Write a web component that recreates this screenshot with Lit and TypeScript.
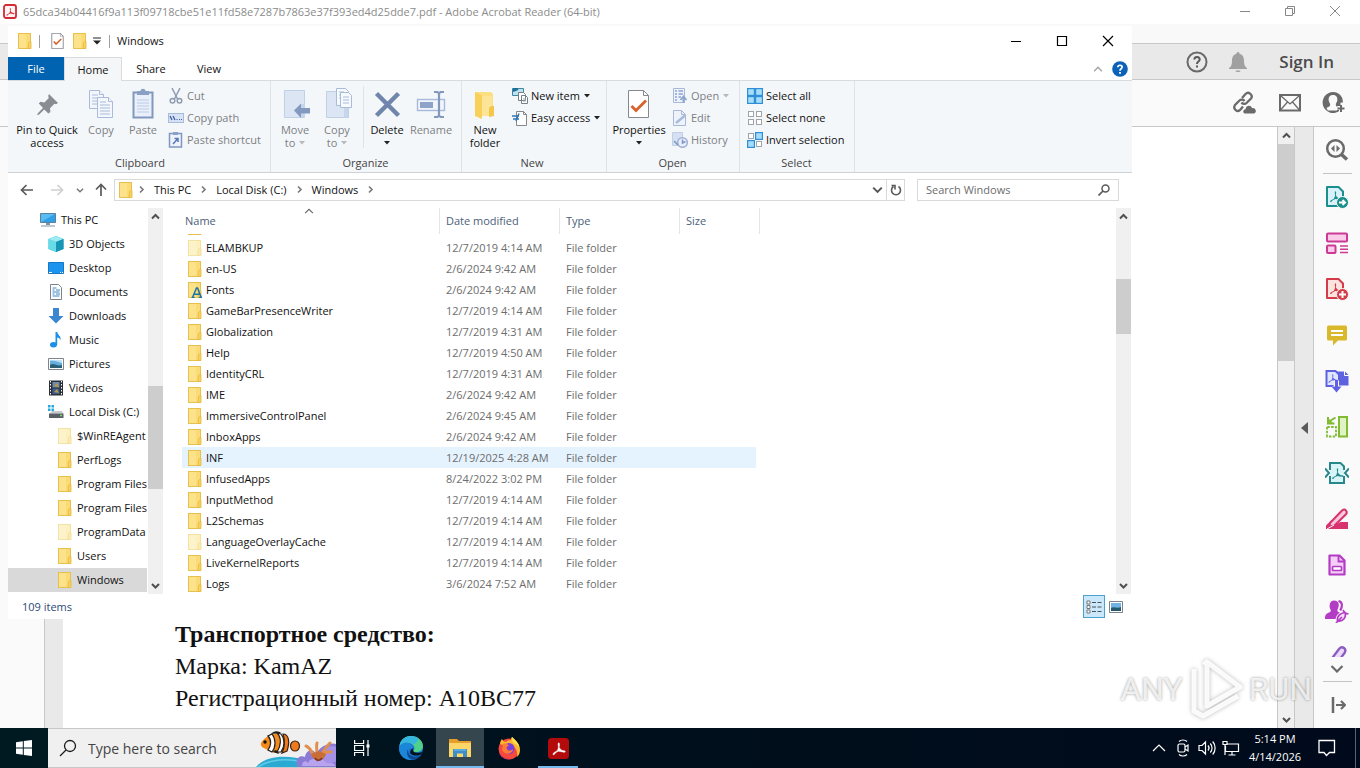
import { LitElement, html, svg, css, nothing, TemplateResult } from "lit";
import { customElement, property } from "lit/decorators.js";
import { classMap } from "lit/directives/class-map.js";

const icon = (w: number, h: number, body: unknown, vb = `0 0 ${w} ${h}`) =>
  html`<svg width=${w} height=${h} viewBox=${vb} fill="none" aria-hidden="true">${body}</svg>`;

/* ---------- Explorer icons ---------- */

const folderIcon = (pale = false, letter = false) =>
  icon(14, 16, svg`
    <rect x="0.5" y="0.5" width="12" height="15" fill=${pale ? "#fdf0bd" : "#fbdc74"} stroke=${pale ? "#f3e2a4" : "#e8c04f"}/>
    <path d="M1 1h7v14H1z" fill=${pale ? "#fdf3cb" : "#fce28b"}/>
    <path d="M10.500 9.500l1-1h1.500v7h-3z" fill=${pale ? "#fcecb0" : "#f8d25c"} stroke=${pale ? "#f0dc98" : "#e3b840"} stroke-width=".8"/>
    ${letter ? svg`<path d="M4.500 15.500L8.500 6h1l3.800 9.500M6.200 12.200h5.600M3.600 15.500h3M11 15.500h3" stroke="#1a76a8" stroke-width="1.500"/>` : nothing}`);

const chevron = (dir: "up" | "down" | "right", color = "#505050", size = 9, weight = 1.6) => {
  const d = { up: "M1 6.500L4.500 3 8 6.500", down: "M1 3l3.500 3.500L8 3", right: "M3 1.500l3 3-3 3" }[dir];
  return icon(size, size, svg`<path d=${d} stroke=${color} stroke-width=${weight}/>`, "0 0 9 9");
};

const caret = (color = "#222") => icon(6, 4, svg`<path d="M0 0h6L3 3.500z" fill=${color}/>`);

const I = {
  docCheck: (w: number, h: number) => icon(w, h, svg`
    <path d="M.5.5h15l5 5v22H.5z" fill="#fff" stroke="#7b8087" stroke-width="1.500"/>
    <path d="M15.500.5v5h5" stroke="#7b8087"/>
    <path d="M4 15l4 4.500 9-9" stroke="#d9622b" stroke-width="2.800"/>`, "0 0 21 28"),
  pin: icon(32, 32, svg`
    <path d="M18 6l9 9-2 1.200-1.600-.4-4.400 4.400.4 3.800-2 1.600-4.200-4.200-5 5L6 27l1-2 5-5-4.200-4.400 1.600-1.800 4 .6 4.400-4.400L17.200 8z" fill="#888d93"/>`),
  copy: icon(32, 32, svg`
    <g fill="#f3f7fd" stroke="#a9bbd9"><path d="M4.500 2.500h10l4 4v14h-14z"/><path d="M14.500 2.500v4h4"/>
    <path d="M7 7h6M7 10h9M7 13h9M7 16h9"/>
    <path d="M12.500 9.500h11l4 4v16h-15z"/><path d="M23.500 9.500v4h4"/><path d="M15 14h6M15 17h10M15 20h10M15 23h10M15 26h10"/></g>`),
  paste: icon(32, 32, svg`
    <rect x="6.500" y="4.500" width="19" height="25" fill="#e9f0fb" stroke="#8198bd" stroke-width="2"/>
    <path d="M10 12h12M10 15h12M10 18h12M10 21h12M10 24h12" stroke="#bccbe4"/>
    <path d="M10 3h3.500c0-3 5-3 5 0H22v4H10z" fill="#8aa0c4"/>`),
  cut: icon(16, 16, svg`
    <path d="M4 0l5.500 11M12 0L6.500 11" stroke="#8f9cb0" stroke-width="1.500"/>
    <circle cx="4.500" cy="12.800" r="2.300" stroke="#8f9cb0" stroke-width="1.500"/><circle cx="11.500" cy="12.800" r="2.300" stroke="#8f9cb0" stroke-width="1.500"/>`),
  path: icon(16, 16, svg`
    <rect x=".5" y="3.500" width="15" height="9" fill="#d7e2f5" stroke="#a9bbdc"/>
    <path d="M2 6l2 4M5 6l2 4" stroke="#3f5e9a" stroke-width="1.300"/><path d="M8.500 9.500h1M11 9.500h1M13 9.500h1" stroke="#3f5e9a"/>`),
  shortcut: icon(16, 16, svg`
    <rect x="1.500" y="1.500" width="12" height="13.500" fill="#eef3fb" stroke="#7f97c0" stroke-width="1.500"/>
    <path d="M5 0h5v3H5z" fill="#8aa0c4"/><path d="M5 12l4.500-5M6.500 6.500H10V10" stroke="#5579b8" stroke-width="1.500"/>`),
  moveTo: icon(32, 32, svg`
    <path d="M5.500 2.500h20v27h-20z" fill="#dbe5f4" stroke="#c2d0e6"/><path d="M22 16h4v13h-4z" fill="#c8d6eb"/>
    <path d="M15 22.500l7-7v4.500h9v5.500h-9V30z" fill="#8399bf"/>`),
  copyTo: icon(32, 32, svg`
    <path d="M5.500 3.500h22v26h-22z" fill="#dbe5f4" stroke="#c2d0e6"/><path d="M23 18h4v11h-4z" fill="#c8d6eb"/>
    <g fill="#f6f9fe" stroke="#a9bbd9"><path d="M15.500.5h9l3 3v14h-12z"/><path d="M18 4h5M18 7h5M18 10h5"/>
    <path d="M19.500 4.500h8l3 3v12h-11z"/><path d="M22 9h6M22 12h6M22 15h6"/></g>`),
  del: icon(32, 32, svg`<path d="M5.500 5.500l22 22M27.500 5.500l-22 22" stroke="#6f85ab" stroke-width="4.500"/>`),
  rename: icon(32, 32, svg`
    <rect x="2.500" y="11.500" width="27" height="11" fill="#f2f6fc" stroke="#a7badb" stroke-width="1.400"/>
    <rect x="5" y="14" width="13" height="6" fill="#8da3c9"/>
    <path d="M19 4h3.500l1.500 1.500L25.500 4H29M24 5v23M19 29h3.500l1.500-1.500 1.500 1.500H29" stroke="#8398bd" stroke-width="2.200"/>`),
  bigFolder: icon(32, 32, svg`
    <path d="M6 4h16l2 2v22H6z" fill="#fbdf80"/><path d="M6 4l7 3.500V31l-7-3z" fill="#f8d05a"/>
    <path d="M13 8h10v20H13z" fill="#fce596"/><path d="M20 20l2-2h3v10l-5 1z" fill="#f4c64a"/>`),
  newItem: icon(16, 16, svg`
    <path d="M.5.5h11v7H.5z" fill="#bfe0ee" stroke="#3f86a5"/><path d="M1 3l5-2M1 1h4" stroke="#1e6f97" stroke-width="2"/>
    <path d="M6.500 4.500h5l2 2v6h-7zM9.500 7.500h4l2 2v6h-6z" fill="#fff" stroke="#767e88"/><path d="M11 11h3M11 13h3" stroke="#9aa"/>`),
  easy: icon(16, 16, svg`
    <path d="M4.500 1.500h7l3 3v11h-10z" fill="#fff" stroke="#83898f"/><path d="M11.500 1.500v3h3" stroke="#83898f"/>
    <path d="M0 6h7M1 9h6M7 3.500L4 11" stroke="#2e77b5" stroke-width="1.500"/>`),
  open: icon(16, 16, svg`
    <path d="M1.500.5h11v14h-11z" fill="#eef3fb" stroke="#a9b9d5"/><path d="M3 3h2M3 6h2M3 9h2M3 12h2M6.500 3H11M6.500 6H11M6.500 9H9" stroke="#8ea5cf" stroke-width="1.500"/>
    <path d="M11.500 15V9.500M8.500 12l3-3.500 3 3.500" stroke="#8ea5cf" stroke-width="1.800"/>`),
  edit: icon(16, 16, svg`
    <path d="M1.500.5h8l4 4v11h-12z" fill="#eef3fb" stroke="#a9b9d5"/><path d="M9.500.5v4h4" stroke="#a9b9d5"/><path d="M4 13l9-7.500" stroke="#a9bbdc" stroke-width="2.500"/>`),
  history: icon(16, 16, svg`
    <path d="M.5.5h10v13H.5z" fill="#d5e0f2" stroke="#c0cee6"/><circle cx="10.500" cy="10.500" r="4.800" fill="#e8eefa" stroke="#9db0d4" stroke-width="1.500"/>
    <path d="M10.500 7.500v3.500l3-1.500M2 9l4 4" stroke="#7f97c4" stroke-width="1.500"/>`),
  selectAll: icon(16, 16, svg`<g fill="#a8dcfb" stroke="#2e8fd6" stroke-width="1.200">
    <rect x=".6" y=".6" width="6.800" height="6.800"/><rect x="8.600" y=".6" width="6.800" height="6.800"/><rect x=".6" y="8.600" width="6.800" height="6.800"/><rect x="8.600" y="8.600" width="6.800" height="6.800"/></g>`),
  selectNone: icon(16, 16, svg`<g fill="#fff" stroke="#a0a4a8">
    <rect x="1.500" y="1.500" width="5" height="5"/><rect x="9.500" y="1.500" width="5" height="5"/><rect x="1.500" y="9.500" width="5" height="5"/><rect x="9.500" y="9.500" width="5" height="5"/></g>`),
  invert: icon(16, 16, svg`
    <g fill="#fff" stroke="#a0a4a8"><rect x="1.500" y="1.500" width="5" height="5"/><rect x="9.500" y="9.500" width="5" height="5"/></g>
    <g fill="#a8dcfb" stroke="#2e8fd6" stroke-width="1.200"><rect x="8.600" y=".6" width="6.800" height="6.800"/><rect x=".6" y="8.600" width="6.800" height="6.800"/></g>`),
};

const place: Record<string, TemplateResult> = {
  pc: icon(16, 16, svg`<path d="M.5 1.500h15v9H.5z" fill="#2f9fe8" stroke="#59809c"/><path d="M1 2h14L1 10z" fill="#5bbcf4"/><path d="M6 11h4v2H6zM1 13.500h14v1H1z" fill="#7d96a8"/>`),
  cube: icon(16, 16, svg`<path d="M8 0l7.500 3v10L8 16 .5 13V3z" fill="#27b3c9"/><path d="M.5 3L8 6v10L.5 13z" fill="#67dbe6"/><path d="M8 0l7.500 3L8 6 .5 3z" fill="#9bebf0"/><path d="M8 6l7.500-3v10L8 16z" fill="#1795b4"/>`),
  desktop: icon(16, 16, svg`<path d="M.5 2.500h15v11H.5z" fill="#1d95ee" stroke="#1478c4"/><path d="M1 12.500h3M12 12.500h1M14 12.500h1" stroke="#fff"/>`),
  docs: icon(16, 16, svg`<path d="M2.500.5h8l3 3v12h-11z" fill="#fff" stroke="#7d8388"/><path d="M4.500 4h4M4.500 6h2M8 6h4M4.500 8h7M4.500 10h2M8 10h4M4.500 12h7" stroke="#3d88c2"/>`),
  down: icon(16, 16, svg`<path d="M5 0h6v8h4.500L8 15.500.5 8H5z" fill="#3a86cf"/>`),
  music: icon(16, 16, svg`<ellipse cx="5.500" cy="12.800" rx="3.500" ry="2.700" fill="#1c8fe6"/><path d="M7.500 0h1.700c.3 3 4.300 4 3.300 8.500-.6-2-1.800-2.800-3.300-3V13H7.500z" fill="#1c8fe6"/>`),
  pictures: icon(16, 16, svg`<path d="M.5 2.500h15v11H.5z" fill="#fff" stroke="#7d8388"/><path d="M2 4h12v8H2z" fill="#64aee0"/><path d="M2 9c4-3 7 2 12 0v3H2z" fill="#2a5f75"/><path d="M2 5c5-1 7 1 12 2V4H2z" fill="#bfe0f5"/>`),
  videos: icon(16, 16, svg`<path d="M1 .5h14v15H1z" fill="#2b3037"/><path d="M2.500 1v14M13.500 1v14" stroke="#fff" stroke-dasharray="1.500 1.500"/><path d="M4.500 2h7v5.500h-7z" fill="#6f8cae"/><path d="M4.500 8.500h7V14h-7z" fill="#3d5d93"/><path d="M6 6l3-3 2 4zM6 12l3-3 2 4z" fill="#b79845"/>`),
  disk: icon(16, 16, svg`<path d="M1.500 9.500L4 7h10l1.500 2.500z" fill="#c6cbd0"/><path d="M1 9.500h14.500v4.500H1z" fill="#5a6066"/><path d="M12 11.500h2" stroke="#69e06b" stroke-width="1.500"/><path d="M0 1h2.500v2.500H0zM3.500 1H6v2.500H3.500zM0 4.500h2.500V7H0zM3.500 4.500H6V7H3.500z" fill="#24a8e0"/>`),
  folder: folderIcon(),
  pale: folderIcon(true),
};

/* ---------- Acrobat icons ---------- */

const acroMark = "M11 5.500c1 0 .9 2.400.4 4.200 1 2.200 2.600 3.300 4.800 3.300 1.500.2 1.300 1.800-.2 1.600-1.800-.3-3.600-.9-5-1-1.800.5-3.200 1.500-4.200 3-.8.9-1.900-.1-1.200-1 1-1 2.500-1.700 3.700-2.300.8-1.400 1.300-2.800 1.400-3.800-.4-1.700-.7-4 .3-4z";
const tool = (body: unknown) => icon(24, 24, body);
const pdfDoc = (line: string, fill: string) => svg`
  <path d="M2 2h11.500L18 6.500V21H2z" fill=${fill} stroke=${line} stroke-width="2" stroke-linejoin="round"/>
  <path d=${acroMark} fill=${line} transform="translate(0 1) scale(.95)"/>`;

const tools: { name: string; art: TemplateResult }[] = [
  { name: "Export PDF", art: tool(svg`${pdfDoc("#1b8f8d", "#d8f1fb")}<circle cx="17.500" cy="17.500" r="6" fill="#1b8f8d" stroke="#fafafa"/><path d="M14 17.500h6M17.500 15l2.700 2.500-2.700 2.500" stroke="#fff" stroke-width="1.800"/>`) },
  { name: "Edit PDF", art: tool(svg`<g fill="#fbcbea" stroke="#cc3a96" stroke-width="2"><rect x="2" y="2.500" width="20" height="8" rx="1"/><rect x="2" y="14.500" width="8.500" height="7.500" rx="1"/></g><path d="M15 15h8M15 18.300h8M15 21.500h8" stroke="#cc3a96" stroke-width="1.400"/>`) },
  { name: "Create PDF", art: tool(svg`${pdfDoc("#d33c48", "#fde3de")}<circle cx="17.500" cy="17.500" r="6" fill="#d33c48" stroke="#fafafa"/><path d="M14 17.500h7M17.500 14v7" stroke="#fff" stroke-width="2"/>`) },
  { name: "Comment", art: tool(svg`<path d="M3.500 2.500h17q1.500 0 1.500 1.500v12q0 1.500-1.500 1.500H13L8 22.500v-5H3.500Q2 17.500 2 16V4q0-1.500 1.500-1.500z" fill="#d9b92b"/><path d="M6 8h12M6 12h12" stroke="#fff" stroke-width="1.800"/>`) },
  { name: "Combine Files", art: tool(svg`<path d="M12 2.500h8l3.500 3.500v10.500H12z" fill="#5f62e0"/><path d="M19.500 2v4.500H24" stroke="#fff"/><path d="M1.500 2h9L14 5.500V17H1.500z" fill="#dfe5fd" stroke="#5f62e0" stroke-width="2"/><path d=${acroMark} fill="#5f62e0" transform="translate(-.5 1) scale(.75)"/><path d="M11.500 11.500v9M7.500 17.500l4 4.500 4-4.500" stroke="#fafafa" stroke-width="5"/><path d="M11.500 11v9" stroke="#5f62e0" stroke-width="3"/><path d="M6.500 17.500h10l-5 6z" fill="#5f62e0"/>`) },
  { name: "Organize Pages", art: tool(svg`<rect x="14" y="2" width="8" height="19.500" fill="#dff3c6" stroke="#81bb31" stroke-width="2"/><path d="M2 12v9.500h9V12z" stroke="#81bb31" stroke-width="1.800" stroke-dasharray="2.500 1.300"/><path d="M10.500 2.500L5 6M3 2v6.500h6.500" stroke="#81bb31" stroke-width="2"/><path d="M3 3v5.500h5.500z" fill="#81bb31"/>`) },
  { name: "Compress PDF", art: tool(svg`<path d="M5 9V2h10.500L19 5.500V9M5 15v7h14v-7" fill="#d8f4f6" stroke="#26888b" stroke-width="2"/><path d="M5 9v6h14V9z" fill="#d8f4f6"/><path d=${acroMark} fill="#26888b" transform="translate(2 2) scale(.95)"/><path d="M0 7.500L4 12 0 16.500M24 7.500L20 12l4 4.500" stroke="#26888b" stroke-width="2"/>`) },
  { name: "Redact", art: tool(svg`<path d="M1 22v-3.500L6.500 13l5 4 4-2H23v7z" fill="#d6336f"/><path d="M5.500 15.500L17 3.500q2.500-2 4 0t0 3.800L9.500 18.500l-5.500 1z" fill="#fcc9dc" stroke="#d6336f" stroke-width="2"/><path d="M2 22l7-4" stroke="#fafafa"/>`) },
  { name: "Prepare Form", art: tool(svg`<path d="M4.500 2.500h10l5 5v14h-15z" fill="#f5cdf8" stroke="#b23cc4" stroke-width="2.200" stroke-linejoin="round"/><path d="M13.500 3v5.500h6" stroke="#b23cc4" stroke-width="1.800"/><rect x="7.500" y="13.500" width="9" height="4" rx="1" fill="#fff" stroke="#b23cc4" stroke-width="1.700"/>`) },
  { name: "Request E-signatures", art: tool(svg`<path d="M9 1.500c4 0 5.500 3 4.500 6.500-.5 2-1.500 2.500-1 4 .5 1 1.500 1.300 2.500 1.700-2.500 1.300-4 3.300-4.500 6.300H0c0-4 1-5.500 4-6.500 1.800-.6 2.200-1.500 1.500-3C3.500 6.500 5 1.500 9 1.500z" fill="#b23cc4"/><path d="M13.500 2c4.500 1 4 5.500 1.700 9.500" stroke="#b23cc4" stroke-width="2.200"/><path d="M12.500 22c-1-5 3-8 7.500-8.500 1.500 4.500-1.500 9.500-7.500 8.500zM11 24l6-6M18 11l1.500 2.500M20 14l3.500 1" fill="#f8dcfb" stroke="#b23cc4" stroke-width="1.700"/>`) },
  { name: "Fill & Sign", art: tool(svg`<path d="M4 22L16 6q2.500-3 5-1t.5 5L11 24z" fill="#ecd9fb" stroke="#8a5cc0" stroke-width="2.300" transform="translate(-2 -2)"/>`) },
];

const A = {
  app: icon(14, 15, svg`<rect x="1" y="1" width="12" height="13" rx="2" fill="#fff5f5" stroke="#d22b35" stroke-width="1.800"/><path d=${acroMark} fill="#d22b35" transform="translate(-.2 .2) scale(.68)"/>`),
  help: icon(22, 22, svg`<circle cx="11" cy="11" r="9.500" stroke="#6a6a6a" stroke-width="2"/><path d="M8.300 8.500c.3-3.500 5.700-3.200 5.400.2-.2 1.900-2.700 2-2.700 4.300" stroke="#5a5a5a" stroke-width="2"/><path d="M10 14.500h2v2h-2z" fill="#5a5a5a"/>`),
  bell: icon(20, 22, svg`<path d="M10 1c1.200 0 1.500 1 1.500 1.700 3.500 1 4.500 3.800 4.500 7 0 4 1 6 3 7.300v1H1v-1c2-1.300 3-3.300 3-7.300 0-3.200 1-6 4.500-7C8.500 2 8.800 1 10 1zM7.500 19.500h5c-.3 2-4.700 2-5 0z" fill="#a0a0a0"/>`),
  link: icon(26, 24, svg`<g stroke="#6a6a6a" stroke-width="2.300"><path d="M10 7l3.500-4c3-3 8 1 5.500 4.500L14.500 12c-1.500 1.500-4 1-5-.5"/><path d="M11 15.500l-2.500 3c-3 3.500-8-.5-5.500-4.500L7.500 9.500c1.500-1.500 4-1 5 .5"/></g><path d="M13.500 22.500c-3 0-3-4 0-4.300.5-4 5.500-4.500 6.500-1 4-1 5.500 5.300 1.500 5.300z" fill="#6a6a6a"/>`),
  mail: icon(24, 20, svg`<rect x="2" y="2" width="20" height="15.500" stroke="#6a6a6a" stroke-width="2"/><path d="M2.500 2.500L12 11l9.500-8.500M2.500 17l7-8M21.500 17l-7-8" stroke="#6a6a6a" stroke-width="1.300"/>`),
  person: icon(24, 24, svg`<path d="M11 1a10 10 0 0 1 10 10.500h-2.500V15h-3.200v4H17v1.200A10.500 10.500 0 1 1 11 1z" fill="#6a6a6a"/><path d="M11 4c3.500 0 4.800 2.500 4.300 5.500-.3 2-1.500 2.500-1.500 4.500 0 1.500 2 2 3 3l-2 2.500h-9L4.500 17c1.500-1 3.700-1.500 3.700-3 0-2-1.200-2.500-1.500-4.500C6.200 6.500 7.500 4 11 4z" fill="#fafafa"/><path d="M19 14v7M15.500 17.500h7" stroke="#6a6a6a" stroke-width="2"/>`),
  find: icon(24, 24, svg`<circle cx="10.500" cy="10.500" r="8.300" stroke="#6a6a6a" stroke-width="2.500"/><path d="M16.500 16.500l5.500 5" stroke="#6a6a6a" stroke-width="3.500"/><path d="M9.500 7v7L6 10.500zM11.500 7v7l3.500-3.500z" fill="#6a6a6a"/>`),
  exit: icon(18, 18, svg`<path d="M5 1v16" stroke="#6a6a6a" stroke-width="2.500"/><path d="M8 9h8.500M13 5l4 4-4 4" stroke="#6a6a6a" stroke-width="2.200"/>`),
};

/* ---------- Taskbar icons ---------- */

const T = {
  start: icon(16, 16, svg`<path d="M0 2.200L6.800 1.200v6.300H0zM7.800 1L16 0v7.500H7.800zM0 8.500h6.800v6.300L0 13.800zM7.800 8.500H16V16l-8.200-1z" fill="#fff"/>`),
  search: icon(18, 18, svg`<circle cx="11" cy="7" r="5.500" stroke="#1c1c1c" stroke-width="1.300"/><path d="M7 11l-6 6" stroke="#1c1c1c" stroke-width="1.300"/>`),
  reef: icon(80, 38, svg`
    <path d="M0 38C10 26 32 25 52 32l10 6z" fill="#2aa9d2"/><path d="M2 38c12-8 30-9 44-5" stroke="#62cbe6" stroke-width="1.500"/>
    <path d="M5 14c4-6 12-11 19-9 5 1 7 6 6 12-1 3-3 6-5 6-6 2-11 0-15-3-3-1-6-3-5-6z" fill="#f28a1c"/>
    <path d="M12 7c4 4 3 10 0 14l4 2c4-5 4-13 0-18z" fill="#fff" stroke="#222" stroke-width="1.200"/>
    <path d="M21 4c5 5 4 13 0 19h4c4-6 4-13 0-18z" fill="#fff" stroke="#222" stroke-width="1.200"/>
    <path d="M15 5c3-4 8-3 10-1zM17 23c2-3 5-2 6 2z" fill="#1d1d1d"/><circle cx="9" cy="13" r="1.700" fill="#111"/>
    <path d="M27 5c6 0 7 8 4 17l-5 2c3-6 3-13 1-19z" fill="#ee7a1d" stroke="#3b2417" stroke-width="1.200"/>
    <ellipse cx="39" cy="17" rx="4.500" ry="5" fill="#ee7a1d" stroke="#3b2417" stroke-width="1.200"/>
    <path d="M42 38c-4-7 1-13 7-10 1-8 9-9 11-3 4-9 16-12 20-10v23z" fill="#8b7bd6"/>
    <path d="M46 37c0-5 4-6 6-3 2-5 8-5 9-1 4-4 9-3 10 1 3-1 9 1 8 3z" fill="#b7a3ee"/>
    <path d="M66 22c5-5 11-6 14-4v14c-4 3-9 3-12 0z" fill="#a592e6"/>
    <path d="M57 26c-2-5-4-8-7-9M61 25c0-5-1-8 0-11M66 25c2-5 5-8 8-11M65 27c3-3 7-5 10-4" stroke="#e08f4c" stroke-width="3" stroke-linecap="round"/>
    <path d="M55 25c3 9 12 9 15 0l-7-3z" fill="#c96c35"/><path d="M59 29c2 3 5 3 7 0" stroke="#7c3420" stroke-width="1.500"/>`),
  taskview: icon(18, 18, svg`<g stroke="#fff" stroke-width="1.200"><path d="M1.600 1v3.500h9V1M1.600 17v-3.500h9V17M1.600 6.500h9v5h-9zM15 1v16"/></g><path d="M13.500 5.500h3v3h-3z" fill="#fff"/>`),
  edge: icon(26, 26, svg`
    <circle cx="13" cy="13" r="12" fill="#1a75cf"/>
    <path d="M1.500 11C3 3 9 1 13 1c7 0 12 5 12 10 0 4-3 6-6.500 6-2 0-3.500-.7-3-1.600 1-1.200 1.200-2.400.6-4C14.500 8 10.500 7 7 7.500c-2.500.5-4.500 2-5.500 3.500z" fill="#4fd08c"/>
    <path d="M1.500 11C3 3 9 1 13 1c3 0 5.500 1 7 2 0 4-3 6-5 6.500C12 7 8 7 5 8.500c-1.500.7-2.700 1.500-3.500 2.500z" fill="#35b6e0"/>
    <path d="M1 13c1-4 5-6 9-5 3 .7 5 3 5 5-3-1-5.500 1.500-5 5 .5 3 3 5.500 7 6.300C8 27 1 21 1 13z" fill="#1c86d8"/>
    <path d="M10 14c-1 7 7 10 13.500 5.500-2 3-5 5-8.500 5.300-5-1-7.500-6-5-10.800z" fill="#0d4a93"/>
    <path d="M15.500 13.500c-.5 1.200-1 2.500.5 3.500 3 1.500 6 .7 8 0l-.5 2c-4 2.500-9.500 2-11.500-1 0-2.500 1.500-4.500 3.500-4.500z" fill="#04131e"/>`),
  folder: icon(22, 20, svg`<path d="M0 1h8l2 2h12v4H0z" fill="#e79d2a"/><path d="M0 5h22v14H0z" fill="#fcd669"/><path d="M4 19v-8h14v8h-4v-3.500H8V19z" fill="#3d8fcb"/><path d="M5 11h12v2H5z" fill="#57a9de"/>`),
  firefox: icon(24, 24, svg`
    <circle cx="12" cy="13" r="10.500" fill="#f5483f"/><path d="M3 8c0-2 1-4 2-5 1 2 2 3 4 3 1-1 3-2 5-2 0-1 0-2 1-3 2 2 8 6 8 13 0 3-1 5-3 7 1-7-2-11-8-12C7 9 4 9 3 8z" fill="#ffb62e"/>
    <path d="M15 1c2 2 6.500 5 7.500 11-2-3-4-4-6-5-1.500-1.500-2-4-1.500-6z" fill="#ffe04a"/>
    <circle cx="12" cy="12.500" r="5.500" fill="#7a3fd8"/><path d="M6 8c3-1 5 0 6 2-2 0-3 1-2 3s4 2 6 0c0 5-8 7-11 1z" fill="#ff7a35"/>
    <path d="M2 17c3 7 13 9 19 2-4 6-14 5-19-2z" fill="#d62a7e"/>`),
  acrobat: icon(21, 21, svg`<rect width="21" height="21" rx="3.500" fill="#b30b0b"/><path d=${acroMark} fill="#fff" stroke="#fff" stroke-width=".4" transform="translate(-.8 -1) scale(1.050)"/>`),
  up: icon(14, 8, svg`<path d="M1 7l6-6 6 6" stroke="#fff" stroke-width="1.200"/>`),
  meet: icon(14, 18, svg`<g stroke="#fff" stroke-width="1.200"><rect x="2" y="5" width="7" height="8" rx="1.500"/><path d="M9 8l3-2v6L9 10M3 2.500c2-2 6-2 8 0M3 15.500c2 2 6 2 8 0"/></g>`),
  sound: icon(18, 16, svg`<g stroke="#fff" stroke-width="1.200"><path d="M1 5.500h3L7.500 2v12L4 10.500H1zM10 5.500c1.300 1.500 1.300 3.500 0 5M12.300 3.500c2.300 2.500 2.300 6.500 0 9M14.700 1.500c3.200 3.500 3.200 9.500 0 13"/></g>`),
  net: icon(18, 16, svg`<g stroke="#fff" stroke-width="1.200"><path d="M5 4h11.500v7.500H3.500V6M10 11.500V15M6.500 15h7M1 1.500h4v3H1zM3 4.500V15"/></g>`),
  note: icon(18, 18, svg`<path d="M1 1.500h15.500v12h-5l-3 3-2.500-3H1z" stroke="#fff" stroke-width="1.300"/>`),
};

const sharedType = css`
  :host { font-family: "Open Sans", "Noto Sans", sans-serif; box-sizing: border-box; }
  *, *::before, *::after { box-sizing: border-box; }
  button, input { font: inherit; color: inherit; background: none; border: 0; padding: 0; margin: 0; border-radius: 0; outline: 0; }
  svg { display: block; flex: none; }
`;

/* ---------- Scroll bar ---------- */

@customElement("scroll-bar")
class ScrollBar extends LitElement {
  @property({ type: Number }) before = 0;
  @property({ type: Number }) thumb = 1;
  @property({ type: Number }) after = 1;
  static styles = [sharedType, css`
    :host { display: flex; flex-direction: column; flex: none; width: 15px; background: #f0f0f0; }
    button { height: 17px; display: grid; place-items: center; flex: none; }
    .thumb { background: #cdcdcd; }
  `];
  render() {
    return html`
      <button aria-label="Scroll up">${chevron("up", "#505050", 9, 2)}</button>
      <div style="flex:${this.before} 0 0"></div>
      <div class="thumb" style="flex:${this.thumb} 0 0"></div>
      <div style="flex:${this.after} 0 0"></div>
      <button aria-label="Scroll down">${chevron("down", "#505050", 9, 2)}</button>`;
  }
}

/* ---------- Explorer window ---------- */

type Small = [TemplateResult, string, boolean?, boolean?];

const folders: [string, string, string?][] = [
  ["Downloaded Program Files", "12/7/2019 4:14 AM"],
  ["ELAMBKUP", "12/7/2019 4:14 AM", "pale"],
  ["en-US", "2/6/2024 9:42 AM"],
  ["Fonts", "2/6/2024 9:42 AM", "font"],
  ["GameBarPresenceWriter", "12/7/2019 4:14 AM"],
  ["Globalization", "12/7/2019 4:31 AM"],
  ["Help", "12/7/2019 4:50 AM"],
  ["IdentityCRL", "12/7/2019 4:31 AM"],
  ["IME", "2/6/2024 9:42 AM"],
  ["ImmersiveControlPanel", "2/6/2024 9:45 AM"],
  ["InboxApps", "2/6/2024 9:42 AM"],
  ["INF", "12/19/2025 4:28 AM", "hover"],
  ["InfusedApps", "8/24/2022 3:02 PM"],
  ["InputMethod", "12/7/2019 4:14 AM"],
  ["L2Schemas", "12/7/2019 4:14 AM"],
  ["LanguageOverlayCache", "12/7/2019 4:14 AM", "pale"],
  ["LiveKernelReports", "12/7/2019 4:14 AM"],
  ["Logs", "3/6/2024 7:52 AM"],
];

const tree: [number, string, string][] = [
  [0, "pc", "This PC"], [1, "cube", "3D Objects"], [1, "desktop", "Desktop"], [1, "docs", "Documents"],
  [1, "down", "Downloads"], [1, "music", "Music"], [1, "pictures", "Pictures"], [1, "videos", "Videos"],
  [1, "disk", "Local Disk (C:)"], [2, "pale", "$WinREAgent"], [2, "folder", "PerfLogs"], [2, "folder", "Program Files"],
  [2, "folder", "Program Files (x86)"], [2, "pale", "ProgramData"], [2, "folder", "Users"], [2, "folder", "Windows"],
];

@customElement("explorer-window")
class ExplorerWindow extends LitElement {
  static styles = [sharedType, css`
    :host { display: flex; flex-direction: column; background: #fff; color: #111; font-size: 11px; line-height: 16px; }
    .title { display: flex; align-items: center; height: 31px; flex: none; padding: 0 1px 1px 10px; }
    .title .sep { width: 1px; height: 13px; background: #a0a0a0; margin: 0 7px; }
    .title .quick { display: flex; align-items: center; }
    .title .props { margin: 0 9px 0 4px; }
    .title .more { margin: 0 0 0 5px; }
    .title .space { flex: 1; }
    .ctl { width: 46px; height: 30px; display: grid; place-items: center; }
    .tabs { display: flex; height: 24px; flex: none; border-bottom: 1px solid #dadbdc; padding-right: 1px; align-items: stretch; }
    .tabs .tab { width: 58px; }
    .tabs .file { width: 56px; background: #0063b1; color: #fff; }
    .tabs .home { background: #f5f6f7; border: 1px solid #dadbdc; border-bottom: 0; height: 24px; }
    .tabs .space { flex: 1; }
    .tabs .tool { width: 22px; display: grid; place-items: center; }
    .ribbon { display: flex; height: 92px; flex: none; background: #f4f7fa; border-bottom: 1px solid #cfd2d6; }
    .group { display: flex; flex-direction: column; border-right: 1px solid #dfe2e6; flex: none; padding-left: 3px; }
    .clipboard { width: 263px; padding-left: 6px; }
    .organize { width: 191px; }
    .new { width: 145px; padding-left: 0; }
    .open { width: 133px; }
    .select { width: 115px; }
    .cmds { display: flex; flex: 1; }
    .caption { text-align: center; line-height: 18px; color: #444; padding-right: 4px; }
    .big { width: 42px; display: flex; flex-direction: column; align-items: center; padding-top: 7px; line-height: 13px; white-space: nowrap; }
    .big svg + span { margin-top: 3px; }
    .big.w66 { width: 66px; }
    .big.w46 { width: 46px; }
    .big.w58 { width: 58px; }
    .big .arrow { height: 13px; display: grid; place-items: center; }
    .big .line { display: flex; align-items: center; gap: 4px; }
    .dim { color: #7c7f84; }
    .rule { width: 1px; background: #dfe2e6; margin: 5px 2px 6px 5px; }
    .stack { display: flex; flex-direction: column; padding: 4px 0 0 4px; }
    .stack button { height: 22px; display: flex; align-items: center; gap: 3px; white-space: nowrap; }
    .stack button svg + span + svg { margin-left: 1px; }
    .nav { display: flex; align-items: center; height: 35px; flex: none; padding: 0 13px 2px 4px; }
    .nav .go { width: 30px; display: grid; place-items: center; height: 22px; }
    .nav .slim { width: 16px; }
    .nav .upward { width: 26px; }
    .addr { flex: 1; height: 22px; border: 1px solid #d9d9d9; display: flex; align-items: center; margin-right: 12px; padding-left: 4px; }
    .addr nav { display: flex; align-items: center; flex: 1; }
    .addr a { color: inherit; text-decoration: none; padding: 0 8px; }
    .addr svg + svg { margin-left: 4px; }
    .addr .box { width: 18px; height: 20px; display: grid; place-items: center; }
    .addr .reload { border-left: 1px solid #d9d9d9; }
    .search { width: 202px; height: 22px; border: 1px solid #d9d9d9; display: flex; align-items: center; padding: 0 8px; }
    .search input { flex: 1; min-width: 0; }
    .search input::placeholder { color: #6d6d6d; opacity: 1; }
    .body { display: flex; flex: 1; min-height: 0; padding-right: 1px; }
    .tree { width: 139px; overflow: hidden; margin-right: 1px; }
    .tree ul { list-style: none; margin: 0; padding: 0; }
    .node { height: 24px; display: flex; align-items: center; gap: 5px; padding-left: 32px; white-space: nowrap; }
    .node.l1 { padding-left: 40px; }
    .node.l2 { padding-left: 50px; }
    .node.on { background: #d9d9d9; }
    .files { flex: 1; overflow: hidden; padding-left: 19px; }
    table { border-collapse: separate; border-spacing: 0; table-layout: fixed; width: 578px; }
    .cName { width: 258px; } .cDate, .cType { width: 120px; } .cSize { width: 80px; }
    th { position: sticky; top: 0; background: #fff; height: 26px; text-align: left; font-weight: 400; color: #4c607a; padding: 0 0 0 6px; border-right: 1px solid #e5e5e5; }
    th:first-child { padding-left: 3px; }
    th .sort { position: absolute; top: -2px; left: 122px; }
    td { height: 21px; padding: 0 0 0 6px; color: #6d6d6d; white-space: nowrap; }
    td:last-child { background-clip: content-box; padding: 0 4px 0 0; }
    td .name { display: flex; align-items: center; gap: 4px; color: #111; }
    tr.hover td { background-color: #e5f3ff; }
    .status { display: flex; height: 25px; flex: none; align-items: center; padding: 0 5px 0 14px; color: #2c4a75; }
    .status span { flex: 1; }
    .status button { display: grid; place-items: center; width: 22px; height: 23px; }
    .status .on { background: #cbe8fa; border: 1px solid #4ba1cf; }
  `];

  firstUpdated() {
    const pane = this.renderRoot.querySelector(".files") as HTMLElement;
    pane.scrollTop = 18;
  }

  private small([art, label, dim, drop]: Small) {
    return html`<button class=${classMap({ dim: !!dim })}>${art}<span>${label}</span>${drop ? caret(dim ? "#b5b8bc" : "#222") : nothing}</button>`;
  }

  render() {
    return html`
      <div class="title">
        <div class="quick">${folderIcon()}<span class="sep"></span></div>
        <button class="props" aria-label="Properties">${I.docCheck(13, 16)}</button>
        <button aria-label="New folder">${folderIcon()}</button>
        <button class="more" aria-label="Customize">${icon(10, 8, svg`<path d="M1 .5h8v1H1zM1 3.500h8L5 7.500z" fill="#222"/>`)}</button>
        <span class="sep"></span><span>Windows</span><span class="space"></span>
        <button class="ctl" aria-label="Minimize">${icon(12, 12, svg`<path d="M1 6.500h10" stroke="#000"/>`)}</button>
        <button class="ctl" aria-label="Maximize">${icon(12, 12, svg`<path d="M1.500 1.500h9v9h-9z" stroke="#000" stroke-width="1.200"/>`)}</button>
        <button class="ctl" aria-label="Close">${icon(12, 12, svg`<path d="M1 1l10 10M11 1L1 11" stroke="#000" stroke-width="1.200"/>`)}</button>
      </div>
      <div class="tabs">
        <button class="tab file">File</button><button class="tab home">Home</button><button class="tab">Share</button><button class="tab">View</button>
        <span class="space"></span>
        <button class="tool" aria-label="Collapse ribbon">${chevron("up", "#a5a5a5", 10, 1.3)}</button>
        <button class="tool" aria-label="Help">${icon(16, 16, svg`<circle cx="8" cy="8" r="7.800" fill="#0b62b8"/><path d="M5.800 6.200c.2-2.700 4.500-2.500 4.300 0C10 7.800 8 7.800 8 9.800" stroke="#fff" stroke-width="1.700"/><path d="M7.100 10.900h1.800v1.800H7.100z" fill="#fff"/>`)}</button>
      </div>
      <div class="ribbon">
        <section class="group clipboard"><div class="cmds">
          <button class="big w66">${I.pin}<span>Pin to Quick</span><span>access</span></button>
          <button class="big dim">${I.copy}<span>Copy</span></button>
          <button class="big dim">${I.paste}<span>Paste</span></button>
          <div class="stack">${([[I.cut, "Cut", true], [I.path, "Copy path", true], [I.shortcut, "Paste shortcut", true]] as Small[]).map(this.small)}</div>
        </div><div class="caption">Clipboard</div></section>
        <section class="group organize"><div class="cmds">
          <button class="big dim">${I.moveTo}<span>Move</span><span class="line">to ${caret("#b5b8bc")}</span></button>
          <button class="big dim">${I.copyTo}<span>Copy</span><span class="line">to ${caret("#b5b8bc")}</span></button>
          <span class="rule"></span>
          <button class="big">${I.del}<span>Delete</span><span class="arrow">${caret()}</span></button>
          <button class="big w46 dim">${I.rename}<span>Rename</span></button>
        </div><div class="caption">Organize</div></section>
        <section class="group new"><div class="cmds">
          <button class="big w46">${I.bigFolder}<span>New</span><span>folder</span></button>
          <div class="stack">${([[I.newItem, "New item", false, true], [I.easy, "Easy access", false, true]] as Small[]).map(this.small)}</div>
        </div><div class="caption">New</div></section>
        <section class="group open"><div class="cmds">
          <button class="big w58">${icon(32, 32, svg`<path d="M5.500 2.500h15l5 5v22h-20z" fill="#fff" stroke="#85898f"/><path d="M20.500 2.500v5h5" stroke="#85898f"/><path d="M8.500 18l4.500 4.500L23 12.500" stroke="#d9622b" stroke-width="2.800"/>`)}<span>Properties</span><span class="arrow">${caret()}</span></button>
          <div class="stack">${([[I.open, "Open", true, true], [I.edit, "Edit", true], [I.history, "History", true]] as Small[]).map(this.small)}</div>
        </div><div class="caption">Open</div></section>
        <section class="group select"><div class="cmds">
          <div class="stack">${([[I.selectAll, "Select all"], [I.selectNone, "Select none"], [I.invert, "Invert selection"]] as Small[]).map(this.small)}</div>
        </div><div class="caption">Select</div></section>
      </div>
      <div class="nav">
        <button class="go" aria-label="Back">${icon(14, 12, svg`<path d="M13 6H1.500M6.500 1l-5 5 5 5" stroke="#5a5a5a" stroke-width="1.700"/>`)}</button>
        <button class="go" aria-label="Forward">${icon(14, 12, svg`<path d="M1 6h11.500M7.500 1l5 5-5 5" stroke="#d0d0d0" stroke-width="1.700"/>`)}</button>
        <button class="go slim" aria-label="Recent">${chevron("down", "#777", 8, 1.6)}</button>
        <button class="go upward" aria-label="Up">${icon(12, 14, svg`<path d="M6 13V1.500M1 6.500l5-5 5 5" stroke="#5a5a5a" stroke-width="1.700"/>`)}</button>
        <div class="addr"><nav>${folderIcon()}${chevron("right", "#777")}<a href="#">This PC</a>${chevron("right", "#777")}<a href="#">Local Disk (C:)</a>${chevron("right", "#777")}<a href="#">Windows</a>${chevron("right", "#777")}</nav>
          <button class="box" aria-label="Previous locations">${chevron("down", "#555", 11, 1.6)}</button>
          <button class="box reload" aria-label="Refresh">${icon(12, 12, svg`<path d="M8.500 2.500a4.500 4.500 0 1 1-5 0M1.500 1.500H5v4" stroke="#5a5a5a" stroke-width="1.600"/>`)}</button>
        </div>
        <label class="search"><input type="search" placeholder="Search Windows" aria-label="Search Windows" />${icon(12, 12, svg`<circle cx="7.500" cy="4.500" r="3.500" stroke="#5a5a5a" stroke-width="1.500"/><path d="M5 7l-4.500 4.500" stroke="#5a5a5a" stroke-width="1.700"/>`)}</label>
      </div>
      <div class="body">
        <div class="tree"><ul>${tree.map(([level, art, label], i) => html`
          <li class=${classMap({ node: true, l1: level === 1, l2: level === 2, on: i === tree.length - 1 })}>${place[art]}<span>${label}</span></li>`)}</ul></div>
        <scroll-bar .before=${161} .thumb=${104} .after=${88}></scroll-bar>
        <div class="files"><table>
          <colgroup><col class="cName" /><col class="cDate" /><col class="cType" /><col class="cSize" /></colgroup>
          <thead><tr><th>Name<span class="sort">${chevron("up", "#666", 10, 1)}</span></th><th>Date modified</th><th>Type</th><th>Size</th></tr></thead>
          <tbody>${folders.map(([name, date, kind]) => html`
            <tr class=${classMap({ hover: kind === "hover" })}><td><span class="name">${folderIcon(kind === "pale", kind === "font")}${name}</span></td><td>${date}</td><td>File folder</td><td></td></tr>`)}</tbody>
        </table></div>
        <scroll-bar .before=${54} .thumb=${55} .after=${243}></scroll-bar>
      </div>
      <div class="status"><span>109 items</span>
        <button class="on" aria-label="Details view">${icon(18, 16, svg`<path d="M2 2h3v3H2zM2 6.500h3v3H2zM2 11h3v3H2z" fill="#fff" stroke="#777"/><path d="M7 3.500h4M7 8h4M7 12.500h4M12.500 3.500h4M12.500 8h4M12.500 12.500h4" stroke="#47525c"/>`)}</button>
        <button aria-label="Thumbnail view">${icon(14, 12, svg`<path d="M.5.500h13v11H.5z" fill="#fff" stroke="#7d8388"/><path d="M2 2h10v8H2z" fill="#6fb4e2"/><path d="M2 7c3-2 6 1 10-1v4H2z" fill="#245a6c"/>`)}</button>
      </div>`;
  }
}

/* ---------- Acrobat window ---------- */

@customElement("acrobat-window")
class AcrobatWindow extends LitElement {
  static styles = [sharedType, css`
    :host { display: flex; flex-direction: column; background: #fff; }
    .title { height: 24px; flex: none; display: flex; align-items: center; padding: 0 3px 2px; font-size: 11px; color: #8c8c8c; gap: 6px; }
    .title .text { flex: 1; white-space: nowrap; overflow: hidden; }
    .title .ctls { display: flex; }
    .title .ctls button { width: 45px; height: 20px; display: grid; place-items: center; }
    .menu { height: 20px; flex: none; background: #f9f9f9; border-bottom: 1px solid #c8c8c8; }
    .tabs { height: 36px; flex: none; background: #e9e9e9; border-bottom: 1px solid #c8c8c8; display: flex; justify-content: flex-end; align-items: center; padding-right: 26px; }
    .tabs button { display: grid; place-items: center; }
    .tabs .help { margin-right: 20px; }
    .tabs .bell { margin-right: 31px; }
    .sign { font-size: 17px; font-weight: 600; color: #4b4b4b; line-height: 20px; }
    .bar { height: 47px; flex: none; background: #fafafa; border-bottom: 1px solid #c8c8c8; display: flex; justify-content: flex-end; align-items: center; gap: 20px; padding-right: 14px; }
    .main { flex: 1; min-height: 0; display: flex; }
    .left { width: 45px; background: #fafafa; border-right: 1px solid #c8c8c8; }
    .gutter { width: 18px; background: #e9e9e9; }
    .page { flex: 1; display: flex; flex-direction: column; justify-content: flex-end; padding: 0 0 14px 112px; font: 24px/32px "Liberation Serif", serif; color: #111; }
    .page p { margin: 0; }
    .page b { font-weight: 700; }
    scroll-bar { width: 18px; border: 1px solid #c8c8c8; border-width: 0 1px; }
    .toggle { width: 19px; background: #e9e9e9; border-right: 1px solid #c8c8c8; display: grid; place-items: center; }
    .side { width: 46px; background: #fafafa; display: flex; flex-direction: column; align-items: center; }
    .side button { height: 46px; width: 46px; display: grid; place-items: center; flex: none; }
    .side .list { flex: 1; min-height: 0; overflow: hidden; }
    .side .line { width: 29px; height: 1px; background: #c4c4c4; flex: none; }
    .side .more { height: 24px; }
  `];
  render() {
    return html`
      <div class="title">${A.app}<span class="text">65dca34b04416f9a113f09718cbe51e11fd58e7287b7863e37f393ed4d25dde7.pdf - Adobe Acrobat Reader (64-bit)</span>
        <div class="ctls">
          <button aria-label="Minimize">${icon(12, 12, svg`<path d="M1 6.500h10" stroke="#888"/>`)}</button>
          <button aria-label="Restore">${icon(12, 12, svg`<path d="M1.500 3.500h7v7h-7zM3.500 3.500v-2h7v7h-2" stroke="#888"/>`)}</button>
          <button aria-label="Close">${icon(12, 12, svg`<path d="M1 1l10 10M11 1L1 11" stroke="#888"/>`)}</button>
        </div></div>
      <div class="menu"></div>
      <div class="tabs"><button class="help" aria-label="Help">${A.help}</button><button class="bell" aria-label="Notifications">${A.bell}</button><button class="sign">Sign In</button></div>
      <div class="bar"><button aria-label="Share link">${A.link}</button><button aria-label="Email">${A.mail}</button><button aria-label="Share with people">${A.person}</button></div>
      <div class="main">
        <div class="left"></div><div class="gutter"></div>
        <div class="page"><p><b>Транспортное средство:</b></p><p>Марка: KamAZ</p><p>Регистрационный номер: A10BC77</p></div>
        <scroll-bar .before=${0} .thumb=${217} .after=${350}></scroll-bar>
        <button class="toggle" aria-label="Show tools">${icon(7, 12, svg`<path d="M7 0v12L0 6z" fill="#5a5a5a"/>`)}</button>
        <div class="side">
          <button aria-label="Search">${A.find}</button><span class="line"></span>
          <div class="list">${tools.map((t) => html`<button aria-label=${t.name}>${t.art}</button>`)}</div>
          <button class="more" aria-label="More tools">${icon(14, 8, svg`<path d="M1.500 1L7 6.500 12.500 1" stroke="#6a6a6a" stroke-width="2.200"/>`)}</button>
          <span class="line"></span><button aria-label="Collapse">${A.exit}</button>
        </div>
      </div>`;
  }
}

/* ---------- Desktop ---------- */

@customElement("app-root")
class AppRoot extends LitElement {
  static styles = [sharedType, css`
    :host { display: flex; flex-direction: column; height: 100vh; overflow: hidden; }
    .desktop { flex: 1; min-height: 0; position: relative; display: flex; }
    acrobat-window { flex: 1; min-width: 0; }
    explorer-window { position: absolute; left: 8px; top: 26px; right: 228px; bottom: 109px; }
    .mark { position: absolute; right: 48px; bottom: 7px; display: flex; align-items: center; gap: 5px; pointer-events: none;
      font: 32px/64px Roboto, sans-serif; color: rgba(255, 255, 255, .8); text-shadow: 0 0 3px rgba(0, 0, 0, .4); }
    .mark svg { filter: drop-shadow(0 0 2px rgba(0, 0, 0, .3)); }
    .taskbar { height: 40px; flex: none; display: flex; background: linear-gradient(90deg, #001a22, #000f1c 50%, #000a1c); color: #fff; font-size: 11px; }
    .taskbar button { width: 48px; display: grid; place-items: center; }
    .search { width: 288px; background: #f0f0f0; display: flex; align-items: center; padding-left: 11px; gap: 11px; color: #444; font-size: 14px; border: 1px solid #c8c8c8; border-width: 1px 0; }
    .search input { flex: 1; min-width: 0; }
    .search input::placeholder { color: #454545; opacity: 1; }
    .apps { display: flex; gap: 1px; padding-left: 2px; flex: 1; }
    .apps .run { border-bottom: 2px solid #76b9ed; padding-top: 2px; }
    .apps .thin { width: 40px; margin: 0 4px; }
    .apps .front { background: #35464f; }
    .tray { display: flex; align-items: center; }
    .tray button { width: 24px; height: 40px; }
    .tray .clock { width: 56px; margin-left: 4px; line-height: 18px; text-align: center; align-content: center; }
    .tray .note { width: 48px; }
    .tray .peek { width: 5px; height: 40px; border-left: 1px solid #5b6370; margin-left: 4px; }
  `];
  render() {
    return html`
      <div class="desktop">
        <acrobat-window></acrobat-window>
        <explorer-window></explorer-window>
        <div class="mark"><span>ANY</span>${icon(56, 64, svg`<path d="M19 5v44l33-19zM19 5l-3 3M6 12v42l9 5 35-20" stroke="#fff" stroke-opacity=".9" stroke-width="5" stroke-linejoin="round"/>`)}<span>RUN</span></div>
      </div>
      <div class="taskbar">
        <button aria-label="Start">${T.start}</button>
        <label class="search">${T.search}<input type="text" placeholder="Type here to search" aria-label="Type here to search" />${T.reef}</label>
        <div class="apps">
          <button aria-label="Task view">${T.taskview}</button><button aria-label="Edge">${T.edge}</button>
          <button class="run front" aria-label="File Explorer">${T.folder}</button><button aria-label="Firefox">${T.firefox}</button>
          <button class="run thin" aria-label="Acrobat">${T.acrobat}</button>
        </div>
        <div class="tray">
          <button aria-label="Show hidden icons">${T.up}</button><button aria-label="Meet now">${T.meet}</button><button aria-label="Volume">${T.sound}</button><button aria-label="Network">${T.net}</button>
          <button class="clock"><span>5:14 PM</span><span>4/14/2026</span></button>
          <button class="note" aria-label="Notifications">${T.note}</button><button class="peek" aria-label="Show desktop"></button>
        </div>
      </div>`;
  }
}
